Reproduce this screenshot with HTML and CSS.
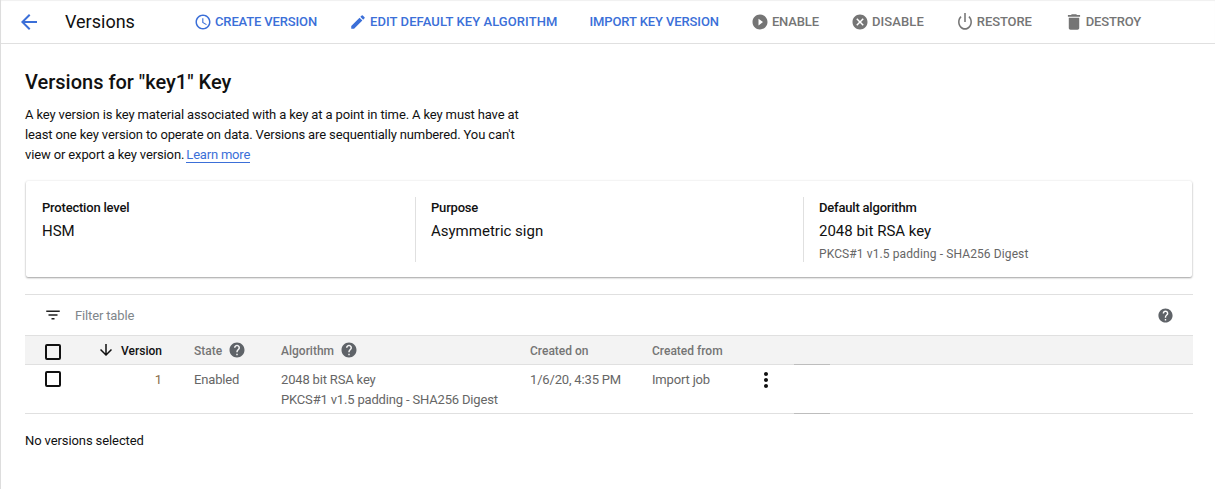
FILE: index.html
```html
<!DOCTYPE html>
<html lang="en">
<head>
    <meta charset="UTF-8">
    <title>Versions</title>
    <link rel="stylesheet" href="styles.css">
</head>
<body>

<header class="topbar">
    <a class="back" href="#">
        <svg width="24" height="24" viewBox="0 0 24 24"><path fill="#3b6fd8" d="M20 11H7.83l5.59-5.59L12 4l-8 8 8 8 1.41-1.41L7.83 13H20z"/></svg>
    </a>
    <div class="page-title">Versions</div>
    <nav class="actions">
        <a class="action create" href="#">
            <svg width="18" height="18" viewBox="0 0 24 24"><path fill="currentColor" d="M11.99 2C6.47 2 2 6.48 2 12s4.47 10 9.99 10C17.52 22 22 17.52 22 12S17.52 2 11.99 2zM12 20c-4.42 0-8-3.58-8-8s3.58-8 8-8 8 3.58 8 8-3.58 8-8 8zm.5-13H11v6l5.25 3.15.75-1.23-4.5-2.67z"/></svg>
            CREATE VERSION
        </a>
        <a class="action edit" href="#">
            <svg width="18" height="18" viewBox="0 0 24 24"><path fill="currentColor" d="M3 17.25V21h3.75L17.81 9.94l-3.75-3.75L3 17.25zM20.71 7.04a1 1 0 0 0 0-1.41l-2.34-2.34a1 1 0 0 0-1.41 0l-1.83 1.83 3.75 3.75 1.83-1.83z"/></svg>
            EDIT DEFAULT KEY ALGORITHM
        </a>
        <a class="action import" href="#">IMPORT KEY VERSION</a>
        <a class="action off enable" href="#">
            <svg width="18" height="18" viewBox="0 0 24 24"><path fill="currentColor" d="M12 2C6.48 2 2 6.48 2 12s4.48 10 10 10 10-4.48 10-10S17.52 2 12 2zm-2 14.5v-9l6 4.5-6 4.5z"/></svg>
            ENABLE
        </a>
        <a class="action off disable" href="#">
            <svg width="18" height="18" viewBox="0 0 24 24"><path fill="currentColor" d="M12 2C6.47 2 2 6.47 2 12s4.47 10 10 10 10-4.47 10-10S17.53 2 12 2zm5 13.59L15.59 17 12 13.41 8.41 17 7 15.59 10.59 12 7 8.41 8.41 7 12 10.59 15.59 7 17 8.41 13.41 12 17 15.59z"/></svg>
            DISABLE
        </a>
        <a class="action off restore" href="#">
            <svg class="restore-icon" width="16" height="18" viewBox="1.65 1.65 20.7 20.7" preserveAspectRatio="none"><path fill="currentColor" d="M13 1h-2v11h2V1zm4.83 4.17l-1.42 1.42C17.99 7.86 19 9.81 19 12c0 3.87-3.13 7-7 7s-7-3.13-7-7c0-2.19 1.01-4.14 2.58-5.42L6.17 5.17C4.23 6.82 3 9.26 3 12c0 4.97 4.03 9 9 9s9-4.03 9-9c0-2.74-1.23-5.18-3.17-6.83z"/></svg>
            RESTORE
        </a>
        <a class="action off destroy" href="#">
            <svg width="18" height="18" viewBox="1.65 1.65 20.7 20.7"><path fill="currentColor" d="M6 19c0 1.1.9 2 2 2h8c1.1 0 2-.9 2-2V7H6v12zM19 4h-3.5l-1-1h-5l-1 1H5v2h14V4z"/></svg>
            DESTROY
        </a>
    </nav>
</header>

<main class="content">
    <h1>Versions for "key1" Key</h1>
    <p class="intro">A key version is key material associated with a key at a point in time. A key must have at least one key version to operate on data. Versions are sequentially numbered. You can't view or export a key version. <a href="#">Learn more</a></p>

    <section class="card">
        <div class="card-col">
            <div class="card-label">Protection level</div>
            <div class="card-value">HSM</div>
        </div>
        <div class="card-col">
            <div class="card-label">Purpose</div>
            <div class="card-value">Asymmetric sign</div>
        </div>
        <div class="card-col">
            <div class="card-label">Default algorithm</div>
            <div class="card-value">2048 bit RSA key</div>
            <div class="card-note">PKCS#1 v1.5 padding - SHA256 Digest</div>
        </div>
    </section>

    <div class="filter">
        <svg class="filter-icon" width="18" height="18" viewBox="0 0 24 24"><path fill="#212121" d="M10 18h4v-2h-4v2zM3 6v2h18V6H3zm3 7h12v-2H6v2z"/></svg>
        <span class="filter-text">Filter table</span>
        <svg class="help-right" width="17" height="17" viewBox="0 0 24 24"><path fill="#5f6368" d="M12 2C6.48 2 2 6.48 2 12s4.48 10 10 10 10-4.48 10-10S17.52 2 12 2zm1 17h-2v-2h2v2zm2.07-7.75l-.9.92C13.45 12.9 13 13.5 13 15h-2v-.5c0-1.1.45-2.1 1.17-2.83l1.24-1.26c.37-.36.59-.86.59-1.41 0-1.1-.9-2-2-2s-2 .9-2 2H8c0-2.21 1.79-4 4-4s4 1.79 4 4c0 .88-.36 1.68-.93 2.25z"/></svg>
    </div>

    <table class="versions">
        <colgroup>
            <col class="c-check"><col class="c-version"><col class="c-state"><col class="c-algo">
            <col class="c-created"><col class="c-from"><col class="c-menu"><col class="c-stub"><col>
        </colgroup>
        <thead>
            <tr>
                <th class="check"><span class="box"></span></th>
                <th class="version">
                    <svg class="sort" width="18" height="18" viewBox="0 0 24 24"><path fill="#111" d="M20 12l-1.41-1.41L13 16.17V4h-2v12.17l-5.58-5.59L4 12l8 8 8-8z"/></svg>
                    Version
                </th>
                <th>State <svg class="help" width="18" height="18" viewBox="0 0 24 24"><path fill="#5f6368" d="M12 2C6.48 2 2 6.48 2 12s4.48 10 10 10 10-4.48 10-10S17.52 2 12 2zm1 17h-2v-2h2v2zm2.07-7.75l-.9.92C13.45 12.9 13 13.5 13 15h-2v-.5c0-1.1.45-2.1 1.17-2.83l1.24-1.26c.37-.36.59-.86.59-1.41 0-1.1-.9-2-2-2s-2 .9-2 2H8c0-2.21 1.79-4 4-4s4 1.79 4 4c0 .88-.36 1.68-.93 2.25z"/></svg></th>
                <th>Algorithm <svg class="help" width="18" height="18" viewBox="0 0 24 24"><path fill="#5f6368" d="M12 2C6.48 2 2 6.48 2 12s4.48 10 10 10 10-4.48 10-10S17.52 2 12 2zm1 17h-2v-2h2v2zm2.07-7.75l-.9.92C13.45 12.9 13 13.5 13 15h-2v-.5c0-1.1.45-2.1 1.17-2.83l1.24-1.26c.37-.36.59-.86.59-1.41 0-1.1-.9-2-2-2s-2 .9-2 2H8c0-2.21 1.79-4 4-4s4 1.79 4 4c0 .88-.36 1.68-.93 2.25z"/></svg></th>
                <th class="plain">Created on</th>
                <th class="plain">Created from</th>
                <th></th>
                <th class="stub"></th>
                <th></th>
            </tr>
        </thead>
        <tbody>
            <tr>
                <td class="check"><span class="box"></span></td>
                <td class="num">1</td>
                <td>Enabled</td>
                <td>2048 bit RSA key<br>PKCS#1 v1.5 padding - SHA256 Digest</td>
                <td>1/6/20, 4:35 PM</td>
                <td>Import job</td>
                <td class="menu">
                    <svg width="24" height="24" viewBox="0 0 24 24"><path fill="#111" d="M12 8c1.1 0 2-.9 2-2s-.9-2-2-2-2 .9-2 2 .9 2 2 2zm0 2c-1.1 0-2 .9-2 2s.9 2 2 2 2-.9 2-2-.9-2-2-2zm0 6c-1.1 0-2 .9-2 2s.9 2 2 2 2-.9 2-2-.9-2-2-2z"/></svg>
                </td>
                <td class="stub"></td>
                <td></td>
            </tr>
        </tbody>
    </table>

    <div class="selected">No versions selected</div>
</main>

</body>
</html>
```

FILE: styles.css
```css
* {
    box-sizing: border-box;
}
body {
    margin: 0;
    height: 489px;
    overflow: hidden;
    background: #fff;
    border-left: 1px solid #ddd;
    font-family: Roboto, "Liberation Sans", sans-serif;
    font-size: 13px;
    color: #111;
}
a {
    text-decoration: none;
}

/* top bar */
.topbar {
    display: flex;
    align-items: center;
    height: 44px;
    border-bottom: 1px solid #e0e0e0;
    box-shadow: inset 0 1px 1px #f0f0f0;
}
.back {
    display: flex;
    margin-left: 16px;
}
.page-title {
    margin-left: 24px;
    width: 129px;
    font-size: 18px;
    color: #111;
}
.actions {
    display: flex;
    align-items: center;
    gap: 32px;
    font-size: 13px;
    font-weight: 500;
}
.action {
    display: flex;
    align-items: center;
    gap: 3px;
    color: #3b6fd8;
}
.action.off {
    color: #757575;
}
.create { letter-spacing: -.14px; }
.edit { letter-spacing: .08px; }
.import { letter-spacing: -.1px; }
.enable { letter-spacing: -.15px; }
.disable { letter-spacing: .1px; }
.restore { letter-spacing: -.1px; }
.restore-icon { margin: 0 1px; }
.destroy { margin-left: 1px; letter-spacing: -.15px; }

/* intro */
.content {
    padding: 0 22px 0 24px;
}
h1 {
    margin: 26px 0 0;
    font-size: 20px;
    font-weight: 500;
    line-height: 24px;
}
.intro {
    margin: 11px 0 0;
    width: 510px;
    line-height: 20px;
    letter-spacing: -.13px;
}
.intro a {
    margin-left: -1px;
    letter-spacing: -.2px;
    color: #3b6fd8;
    border-bottom: 1px solid #3b6fd8;
}

/* summary card */
.card {
    display: grid;
    grid-template-columns: 389px 388px 1fr;
    height: 96px;
    margin: 16px 1px 0 1px;
    padding: 16px 0;
    border-radius: 2px;
    box-shadow: 0 1px 2px rgba(0, 0, 0, .35), 0 0 3px rgba(0, 0, 0, .08);
}
.card-col {
    padding-left: 15px;
    border-left: 1px solid #e0e0e0;
}
.card-col:first-child {
    padding-left: 16px;
    border-left: 0;
}
.card-label {
    margin-top: 1px;
    font-weight: 500;
    line-height: 20px;
    letter-spacing: -.2px;
}
.card-value {
    margin-top: 1px;
    font-size: 15px;
    line-height: 24px;
}
.card-note {
    margin-top: 3px;
    font-size: 12px;
    line-height: 16px;
    letter-spacing: .11px;
    color: #666;
}

/* filter */
.filter {
    display: flex;
    align-items: center;
    height: 42px;
    margin-top: 17px;
    padding: 0 19px 0 19px;
    border-top: 1px solid #e0e0e0;
    border-bottom: 1px solid #e0e0e0;
}
.filter-text {
    margin-left: 13px;
    font-size: 13px;
    letter-spacing: -.15px;
    color: #80868b;
}
.help-right {
    margin-left: auto;
}

/* table */
.versions {
    width: 1168px;
    table-layout: fixed;
    border-collapse: collapse;
    font-size: 13px;
}
.c-check { width: 65px; }
.c-version { width: 104px; }
.c-state { width: 87px; }
.c-algo { width: 249px; }
.c-created { width: 122px; }
.c-from { width: 100px; }
.c-menu { width: 42px; }
.c-stub { width: 36px; }
.versions th {
    height: 28px;
    padding: 0;
    background: #f3f3f3;
    border-bottom: 1px solid #e0e0e0;
    font-size: 12px;
    font-weight: 500;
    text-align: left;
    color: #757575;
}
.versions td {
    height: 49px;
    padding: 5px 0 3px;
    border-bottom: 1px solid #e0e0e0;
    vertical-align: top;
    line-height: 20px;
    letter-spacing: -.17px;
    color: #666;
}
.versions .stub {
    border-bottom-color: #bdbdbd;
}
.versions .check {
    padding-left: 20px;
}
.versions th.check {
    padding-top: 4px;
}
.versions th.plain {
    padding-top: 2px;
}
.versions td.check {
    padding-top: 6px;
}
.box {
    display: block;
    width: 16px;
    height: 16px;
    border: 2px solid #111;
    border-radius: 2px;
}
.versions .version {
    padding-right: 32px;
    text-align: right;
    color: #111;
}
.sort {
    margin-right: 3px;
    vertical-align: -4px;
}
.help {
    margin-left: 3px;
    vertical-align: -4px;
}
.versions .num {
    padding-right: 32px;
    text-align: right;
    color: #8a6d4b;
}
.versions .menu {
    padding: 3px 0 0 2px;
}
.menu svg {
    display: block;
}

.selected {
    margin-top: 18px;
    line-height: 18px;
    letter-spacing: -.1px;
}
```
